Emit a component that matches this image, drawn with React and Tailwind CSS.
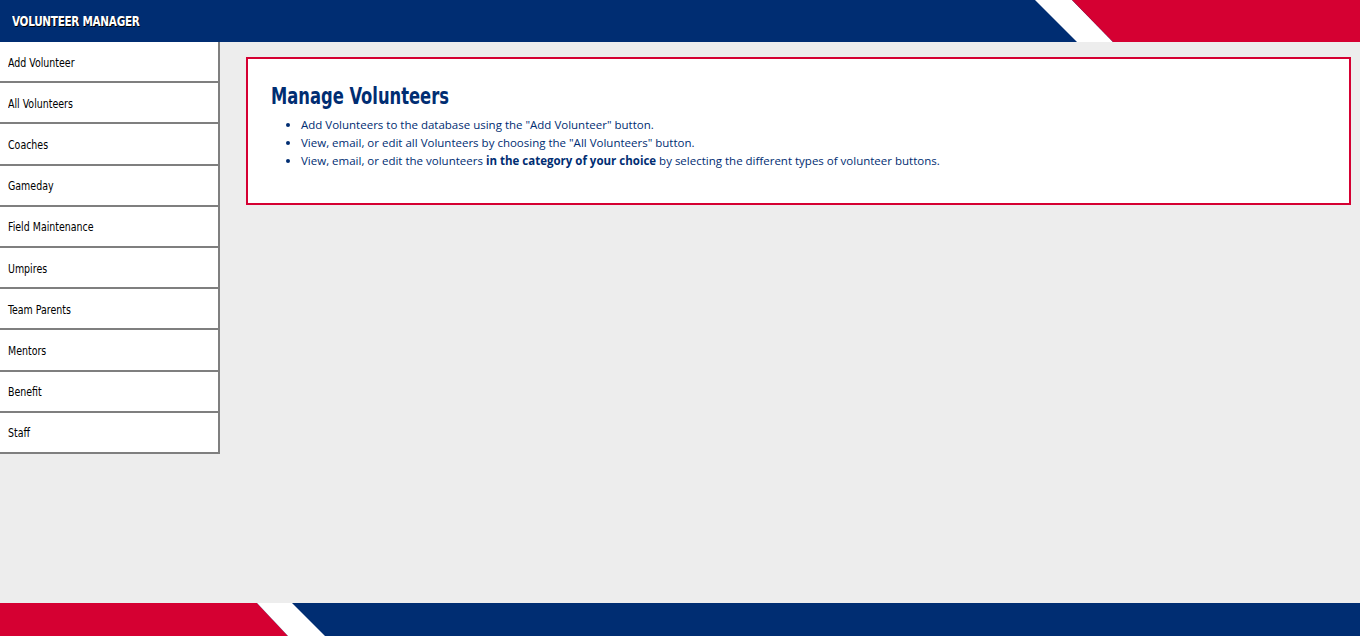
import React from 'react'

const navItems = [
  'Add Volunteer',
  'All Volunteers',
  'Coaches',
  'Gameday',
  'Field Maintenance',
  'Umpires',
  'Team Parents',
  'Mentors',
  'Benefit',
  'Staff'
]

const narrow = { fontFamily: '"Liberation Sans Narrow", "DejaVu Sans Condensed", "Roboto", sans-serif' }

const Header = () => (
  <header className="relative h-[42px] shrink-0 bg-[#002d72] flex items-center px-3">
    <span
      className="inline-block origin-left scale-x-[0.83] text-white font-bold text-[14px] tracking-tight [text-shadow:1px_1px_0_#000]"
      style={narrow}
    >
      VOLUNTEER MANAGER
    </span>
    <svg className="absolute right-0 top-0" width="325" height="42" viewBox="0 0 325 42">
      <polygon points="0,0 37,0 78,42 42,42" fill="#ffffff" />
      <polygon points="37,0 325,0 325,42 78,42" fill="#d50032" />
    </svg>
  </header>
)

const Footer = () => (
  <footer className="relative h-[33px] shrink-0 bg-[#002d72]">
    <svg className="absolute left-0 top-0" width="330" height="33" viewBox="0 0 330 33">
      <polygon points="0,0 257,0 288,33 0,33" fill="#d50032" />
      <polygon points="257,0 292,0 325,33 288,33" fill="#ffffff" />
    </svg>
  </footer>
)

const Sidebar = () => (
  <nav className="w-[220px] shrink-0 self-start bg-white border-r-2 border-[#7f7f7f]">
    {navItems.map(item => (
      <div
        key={item}
        className="h-[41.2px] flex items-center px-2 pt-[3px] border-b-2 border-[#7f7f7f] text-[12.5px] text-black"
      >
        <span className="inline-block origin-left scale-x-[0.84] whitespace-nowrap" style={narrow}>
          {item}
        </span>
      </div>
    ))}
  </nav>
)

export default function App() {
  return (
    <div className="h-[636px] flex flex-col bg-[#ededed]">
      <Header />
      <div className="flex flex-1 min-h-0">
        <Sidebar />
        <main className="flex-1 pt-[15px] pl-[26px] pr-[9px]">
          <section className="h-[148px] bg-white border-2 border-[#d50032] pl-[23px] pt-[22px]">
            <h1
              className="inline-block origin-left scale-x-[0.79] text-[23px] leading-[30px] text-[#002d72] font-bold"
              style={narrow}
            >
              Manage Volunteers
            </h1>
            <ul
              className="mt-[5px] list-disc pl-[30px] text-[11.5px] leading-[18px] text-[#002d72]"
              style={{ fontFamily: '"Open Sans", "Noto Sans", sans-serif' }}
            >
              <li>Add Volunteers to the database using the "Add Volunteer" button.</li>
              <li>View, email, or edit all Volunteers by choosing the "All Volunteers" button.</li>
              <li>
                View, email, or edit the volunteers <b>in the category of your choice</b> by selecting the
                different types of volunteer buttons.
              </li>
            </ul>
          </section>
        </main>
      </div>
      <Footer />
    </div>
  )
}
